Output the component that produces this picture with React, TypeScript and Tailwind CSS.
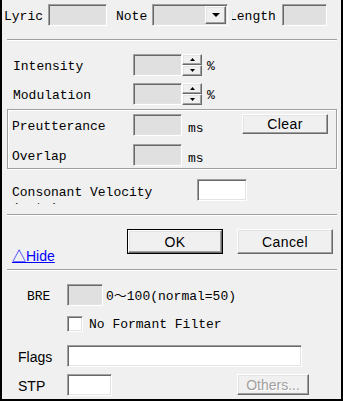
const sunken =
  "border border-t-[#a0a0a0] border-l-[#a0a0a0] border-r-white border-b-white shadow-[inset_1px_1px_0_#696969,inset_-1px_-1px_0_#e3e3e3]";
const raised =
  "border border-t-white border-l-white border-r-[#696969] border-b-[#696969] shadow-[inset_-1px_-1px_0_#a0a0a0,inset_1px_1px_0_#e3e3e3] bg-[#f0f0f0]";
const sep = "ml-[5px] w-[330px] h-[2px] border-t border-t-[#a0a0a0] border-b border-b-white";
const sans = "font-['Liberation_Sans','Noto_Sans_CJK_JP',sans-serif] text-[14px]";

function Spin() {
  return (
    <div className="flex flex-col w-[20px] h-[22px]">
      <div className={`${raised} h-[11px] flex items-center justify-center`}>
        <svg width="5" height="3" viewBox="0 0 5 3">
          <path d="M2.5 0 L5 3 L0 3 Z" fill="#000" />
        </svg>
      </div>
      <div className={`${raised} h-[11px] flex items-center justify-center`}>
        <svg width="5" height="3" viewBox="0 0 5 3">
          <path d="M0 0 L5 0 L2.5 3 Z" fill="#000" />
        </svg>
      </div>
    </div>
  );
}

export default function App() {
  return (
    <div className="w-[343px] h-[401px] bg-[#f0f0f0] border-x-2 border-b-2 border-black overflow-hidden font-['Liberation_Mono','Noto_Sans_CJK_JP',monospace] text-[13px] leading-[13px] text-black">
      {/* top row */}
      <div className="mt-[4px] h-[22px] flex items-center">
        <div className="ml-[2px] w-[44px] pt-[2px]">Lyric</div>
        <div className={`${sunken} w-[59px] h-[22px] bg-[#e0e0e0]`} />
        <div className="ml-[9px] w-[36px] pt-[2px]">Note</div>
        <div className={`${sunken} w-[76px] h-[22px] bg-[#e0e0e0] flex justify-end p-[1px]`}>
          <div className={`${raised} w-[21px] h-full flex items-center justify-center`}>
            <svg width="8" height="4" viewBox="0 0 8 4">
              <path d="M0 0 L8 0 L4 4 Z" fill="#000" />
            </svg>
          </div>
        </div>
        <div className="ml-[4px] w-[50px] overflow-hidden pt-[2px]">
          <span className="ml-[-3px]">Length</span>
        </div>
        <div className={`${sunken} w-[45px] h-[22px] bg-[#e0e0e0]`} />
      </div>

      <div className={`mt-[13px] ${sep}`} />

      <div className="mt-[13px] h-[22px] flex items-center">
        <div className="ml-[11px] w-[120px] pt-[2px]">Intensity</div>
        <div className={`${sunken} w-[49px] h-[22px] bg-[#e0e0e0]`} />
        <Spin />
        <div className="ml-[5px] pt-[2px]">%</div>
      </div>

      <div className="mt-[7px] h-[22px] flex items-center">
        <div className="ml-[11px] w-[120px] pt-[2px]">Modulation</div>
        <div className={`${sunken} w-[49px] h-[22px] bg-[#e0e0e0]`} />
        <Spin />
        <div className="ml-[5px] pt-[2px]">%</div>
      </div>

      {/* group box */}
      <div className="mt-[4px] ml-[5px] w-[330px] h-[60px] border border-[#a0a0a0] shadow-[inset_1px_1px_0_white,1px_1px_0_white] pt-[4px]">
        <div className="h-[22px] flex items-start">
          <div className="ml-[4px] w-[121px] h-[22px] flex items-center pt-[3px]">Preutterance</div>
          <div className={`${sunken} w-[49px] h-[22px] bg-[#e0e0e0]`} />
          <div className="ml-[6px] w-[54px] h-[22px] flex items-center pt-[7px]">ms</div>
          <button className={`${raised} ${sans} w-[86px] h-[20px] leading-[16px] tracking-[0.4px]`}>Clear</button>
        </div>
        <div className="mt-[8px] h-[22px] flex items-start">
          <div className="ml-[4px] w-[121px] h-[22px] flex items-center pt-[3px]">Overlap</div>
          <div className={`${sunken} w-[49px] h-[22px] bg-[#e0e0e0]`} />
          <div className="ml-[6px] w-[54px] h-[22px] flex items-center pt-[7px]">ms</div>
        </div>
      </div>

      <div className="mt-[10px] flex items-start">
        <div className="ml-[10px] w-[185px] h-[25px] pt-[6px] leading-[16px] overflow-hidden">
          Consonant Velocity
          <br />
          (rate)
        </div>
        <div className={`${sunken} w-[50px] h-[22px] bg-white`} />
      </div>

      <div className={`mt-[10px] ${sep}`} />

      <div className="mt-[13px] h-[35px] flex items-start">
        <div className={`ml-[10px] w-[115px] pt-[19px] ${sans} leading-[16px]`}>
          <a href="#" className="text-[#0000ff] underline">
            △Hide
          </a>
        </div>
        <div className="w-[96px] h-[25px] border border-black">
          <button className={`${raised} ${sans} w-full h-full leading-[16px] tracking-[0.4px]`}>OK</button>
        </div>
        <button className={`${raised} ${sans} ml-[14px] w-[96px] h-[25px] leading-[16px] tracking-[0.4px]`}>Cancel</button>
      </div>

      <div className={`mt-[5px] ${sep}`} />

      <div className="mt-[13px] h-[22px] flex items-center">
        <div className="ml-[25px] w-[40px] pt-[2px]">BRE</div>
        <div className={`${sunken} w-[36px] h-[22px] bg-[#e0e0e0]`} />
        <div className="ml-[3px] pt-[2px]">0～100(normal=50)</div>
      </div>

      <div className="mt-[10px] h-[16px] flex items-center">
        <div className={`${sunken} ml-[65px] w-[16px] h-[16px] bg-white`} />
        <div className="ml-[6px] pt-[1px]">No Formant Filter</div>
      </div>

      <div className="mt-[13px] h-[22px] flex items-center">
        <div className={`ml-[16px] w-[49px] ${sans} pt-[2px]`}>Flags</div>
        <div className={`${sunken} w-[235px] h-[22px] bg-white`} />
      </div>

      <div className="mt-[7px] h-[22px] flex items-start">
        <div className={`ml-[16px] w-[49px] h-[22px] flex items-center ${sans} pt-[2px]`}>STP</div>
        <div className={`${sunken} w-[45px] h-[22px] bg-white`} />
        <button
          disabled
          className={`${raised} ${sans} ml-[125px] w-[72px] h-[21px] leading-[16px] text-[#a0a0a0] [text-shadow:1px_1px_0_white]`}
        >
          Others...
        </button>
      </div>
    </div>
  );
}
